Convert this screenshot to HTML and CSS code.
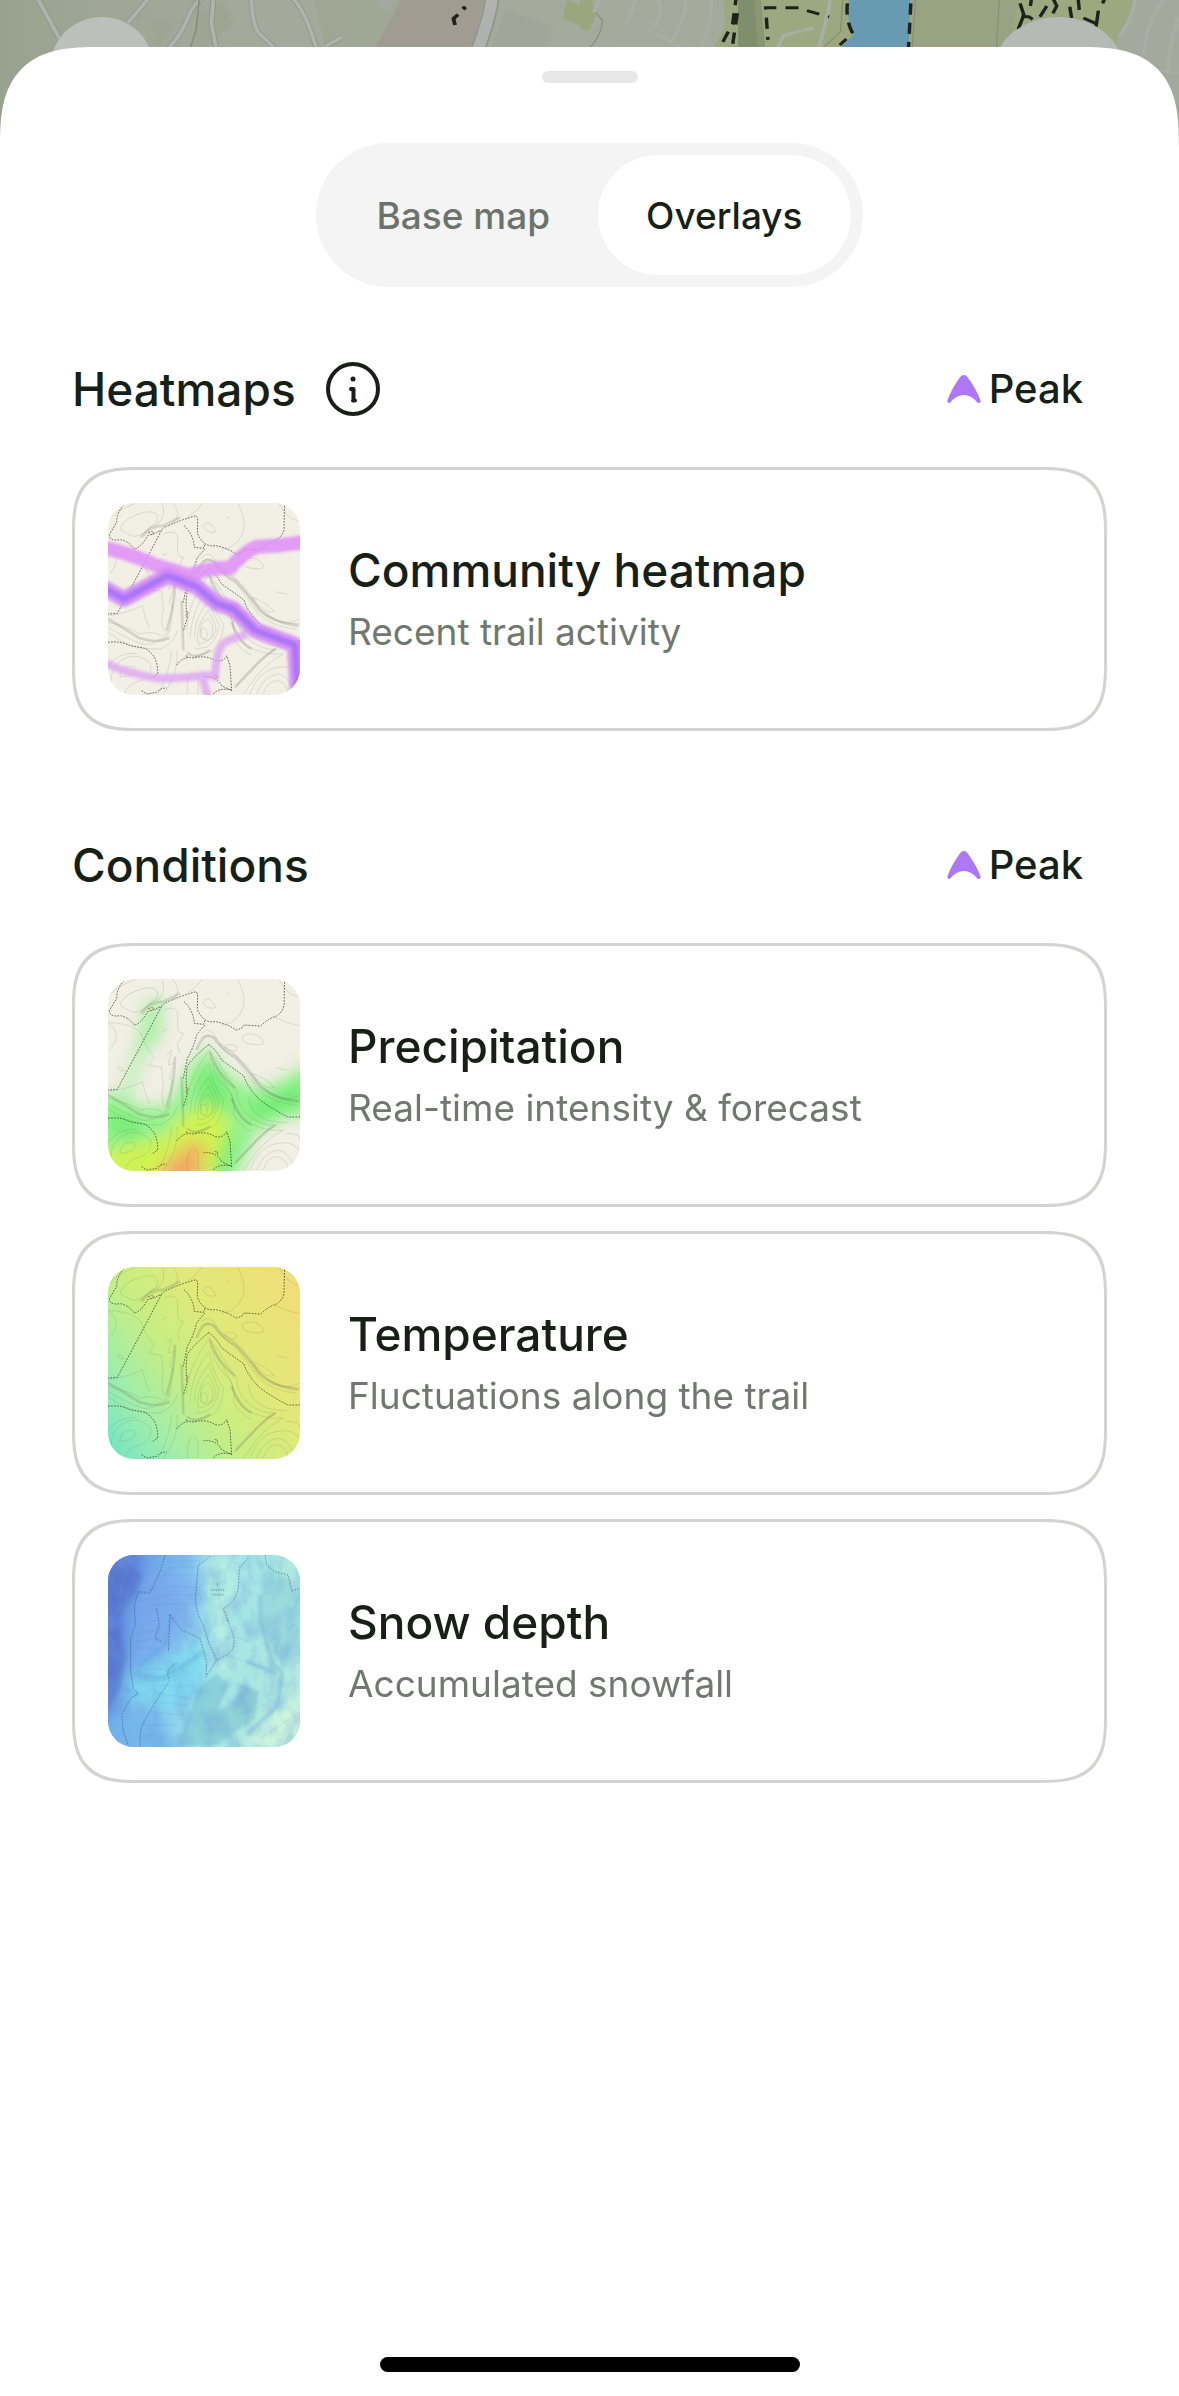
FILE: index.html
```html
<!DOCTYPE html>
<html lang="en">
<head>
    <meta charset="UTF-8">
    <meta name="viewport" content="width=device-width, initial-scale=1">
    <title>Map overlays</title>
    <link rel="stylesheet" href="styles.css">
</head>
<body>
    <!-- shared terrain drawing for the thumbnails -->
    <svg class="defs" width="0" height="0" aria-hidden="true">
        <defs>
            <filter id="blur4" x="-20%" y="-20%" width="140%" height="140%"><feGaussianBlur stdDeviation="5"/></filter>
            <filter id="blur20" x="-50%" y="-50%" width="200%" height="200%"><feGaussianBlur stdDeviation="22"/></filter>
            <filter id="relief" x="0" y="0" width="100%" height="100%">
                <feTurbulence type="fractalNoise" baseFrequency=".022 .014" numOctaves="4" seed="8"/>
                <feColorMatrix values="0 0 0 0 .16  0 0 0 0 .36  0 0 0 0 .72  1.8 0 0 0 -.7"/>
            </filter>
            <symbol id="terrain" viewBox="24 27 576 576">
                <g fill="none" stroke="#77776a" stroke-opacity=".36" stroke-width="1.5">
                    <path d="M24 80Q55 45 105 29M62 108Q60 82 105 64Q160 42 172 64Q180 85 145 105Q115 135 92 124ZM186 27Q200 60 176 88Q145 95 118 133M218 27Q250 60 215 92M306 29Q285 58 262 68M415 30Q445 90 423 128Q400 165 365 165M308 98Q325 68 347 112Q325 122 308 98ZM536 27Q560 76 599 82M523 142Q565 160 600 168M24 158Q70 190 33 236M24 158Q125 160 132 215Q150 250 162 260L146 286L185 292L190 350Q180 380 193 412"/>
                    <path d="M190 120Q240 100 233 152Q228 190 250 190L232 225L240 250M200 255L215 240L205 285L222 280L208 325L220 335L212 390Q210 425 185 440M426 200Q455 180 484 206Q504 226 465 224Q425 222 426 200ZM373 230Q390 215 411 232Q409 256 373 230ZM455 310Q490 320 523 352Q500 367 455 310ZM52 292Q60 282 72 303Q60 306 52 292ZM529 294L560 300M380 68L389 72M187 184L202 178"/>
                    <path d="M24 365Q75 360 127 335Q135 375 148 402M24 385Q90 400 120 420Q160 410 185 425M24 400Q90 440 135 452Q180 450 210 405M24 415Q90 470 180 465Q220 450 232 410M40 600Q20 540 55 505Q110 465 153 512Q155 550 120 560Q80 570 75 600M24 520Q50 475 110 478M60 550Q60 515 98 516Q115 530 90 545ZM215 470Q210 535 175 600M232 470Q235 545 190 600"/>
                    <path d="M260 410Q260 330 328 240Q335 310 375 350Q410 380 400 430Q420 470 455 485M270 430Q275 345 327 280Q340 350 370 390Q370 440 340 470L280 490M283 430Q285 365 326 320Q345 370 358 395Q350 440 320 460L285 465M292 430Q298 375 325 350Q348 390 348 410Q335 445 295 450ZM300 425Q300 380 325 375Q345 395 335 430Q315 450 300 425ZM303 405Q320 395 322 420Q320 445 304 430Z"/>
                    <path d="M305 190Q330 165 350 205Q370 240 400 248Q450 290 480 345Q520 390 600 390M305 202Q335 185 350 220Q380 250 410 270Q440 310 475 360Q520 400 590 405M360 220Q420 260 450 310Q480 350 530 380Q560 395 600 375M345 262Q380 320 410 360Q410 410 450 440Q490 470 530 465M340 280Q380 345 395 375Q400 430 440 455Q490 485 550 480M445 380Q450 430 500 450Q540 460 560 458M530 465Q480 490 455 530L410 575M550 480Q490 510 445 580L430 600M560 490Q600 490 600 510M450 600Q475 530 530 520Q580 510 600 545M470 600Q490 545 535 540Q570 545 585 600M490 600Q500 560 535 560Q560 570 565 600M280 540Q300 530 293 600M262 600Q260 550 275 538"/>
                </g>
                <g fill="none" stroke="#66665a" stroke-opacity=".2" stroke-width="8">
                    <path d="M24 375Q75 405 118 432Q170 450 208 432M125 130Q150 95 190 95L240 70M290 240Q310 180 345 205Q370 245 405 260Q445 300 475 345Q515 385 595 395M330 245Q350 310 405 355M395 385Q420 450 455 465M225 260Q225 330 200 410M262 475Q285 500 330 468M525 465Q480 495 405 580M245 320L250 470"/>
                </g>
                <g fill="none" stroke="#25251c" stroke-opacity=".85" stroke-width="2.4" stroke-dasharray="5 4">
                    <path d="M72 32Q50 55 50 85L28 122Q28 142 60 137Q85 140 103 166Q125 158 143 125Q180 115 193 100Q235 80 288 65L293 72L292 118Q310 160 345 155Q380 160 408 180Q430 175 432 165L482 168Q505 145 530 138Q555 120 552 95L554 27"/>
                    <path d="M184 110L125 222L52 358L24 360M252 95Q280 120 283 160L310 163L316 150M315 165Q300 180 290 195Q280 235 262 265Q255 300 250 325M326 224Q275 265 262 290Q255 330 262 370L250 412M326 224Q345 235 365 270Q400 295 432 318Q440 350 480 390Q530 425 565 441H600M24 445Q60 440 90 455L135 463Q175 485 173 540L155 552M230 513Q250 485 280 492Q320 482 345 500Q370 505 380 485L390 515L395 590L365 575Q350 545 310 548M125 590L140 600L170 595Q180 582 200 582M340 600Q355 580 398 588"/>
                </g>
                <g fill="none" stroke="#a5573c" stroke-width="2"><path d="M144 117q5-8 5 2m4-6q8-4 6 9M257 352q12 3 4 8t2 12M256 487q6-6 7 4M343 545q12-3 9 10"/></g>
            </symbol>
        </defs>
    </svg>

    <div class="map" aria-hidden="true">
        <svg viewBox="0 0 1179 160" preserveAspectRatio="xMidYMin slice">
            <defs>
                <linearGradient id="land">
                    <stop offset="0" stop-color="#98a38f"/><stop offset=".12" stop-color="#a1a797"/>
                    <stop offset=".3" stop-color="#a6aa9d"/><stop offset="1" stop-color="#a3a99c"/>
                </linearGradient>
            </defs>
            <path fill="url(#land)" d="M0 0H1179V160H0Z"/>
            <g transform="scale(.383 .333)">
                <path fill="#a09c92" d="M1048 0H1264L1232 145H978Z"/>
                <path fill="#9ba590" d="M820 0H1048L978 145H850ZM580 0L610 70L540 145H500L515 40ZM395 60L460 70L410 145Z" opacity=".6"/>
                <path fill="#a3a99f" d="M980 0H1040L1010 42Z"/>
                <path fill="#98a77d" d="M1480 0L1560 35L1540 90L1470 55Z"/>
                <path fill="#a2a69a" d="M1320 30L1445 80L1430 145H1280Z"/>
                <path fill="none" stroke="#92988b" stroke-width="15" d="M98-5L155 115M388-5L334 68M528-5Q505 10 490 55Q470 110 440 145M557-5L552 70L564 145M656-5Q660 80 675 98L718 145M765-5Q800 40 826 145M892 112L850 138"/>
                <path fill="none" stroke="#afb2ad" stroke-width="10" d="M98-5L155 115M388-5L334 68M528-5Q505 10 490 55Q470 110 440 145M557-5L552 70L564 145M656-5Q660 80 675 98L718 145M765-5Q800 40 826 145M892 112L850 138"/>
                <path fill="none" stroke="#92968d" stroke-width="40" d="M1284-5Q1282 40 1249 145"/>
                <path fill="none" stroke="#afb2af" stroke-width="30" d="M1284-5Q1282 40 1249 145"/>
                <path fill="none" stroke="#868c75" stroke-width="4" d="M520 0L512 90L497 145"/>
                <path fill="none" stroke="#20211c" stroke-width="10" d="M1196 44L1184 56L1188 75M1208 20L1216 28"/>
                <ellipse cx="266" cy="197" rx="133" ry="146" fill="#bcbfba"/>
            </g>
            <g transform="translate(580 0) scale(.382 .333)">
                <path fill="#9ba981" d="M375 0H1460L1400 145H350L380 75Z"/>
                <path fill="#98a77d" d="M0 0H30L40 40L20 95L0 85Z"/>
                <path fill="#7f8f6e" d="M414 0H457L475 145H414Z"/>
                <path fill="#899774" d="M457 0H474L485 145H465Z"/>
                <path fill="#689ab1" d="M704 0H865L860 145H682L715 105L700 40Z"/>
                <path fill="#97a382" d="M868 0H1150L1120 145H868Z"/>
                <path fill="none" stroke="#868c75" stroke-width="3" d="M878 0L870 145M1098 0L1090 145M688 0L682 95L635 145M35 30L58 60Q60 100 25 145"/>
                <path fill="none" stroke="#a9ada5" stroke-width="10" d="M52-5L36 38M148-5Q140 20 120 76M205-5Q220 50 187 88M276-5Q280 50 240 125M342-5Q350 60 315 145M172 82L265 145M655-5Q652 40 624 145M612 83L532 107L518 145M1455-5Q1445 60 1410 110M1530-5Q1485 60 1476 160M1568 50Q1545 110 1540 210M1490 208L1575 220"/>
                <path fill="none" stroke="#20211c" stroke-width="9" stroke-dasharray="34 24" d="M410-18L400 70L365 145M412 40L398 145M700 10Q695 60 714 100L680 135M866 10L860 145M572 23H486L492 120M594 32L652 51"/>
                <path fill="none" stroke="#20211c" stroke-width="9" d="M1152 10L1162 45L1147 88M1155 50H1175L1185 58M1182-5L1179 18M1222 18L1204 50M1238-5L1248 18L1238 40M1304-5L1307 30M1282 20L1287 54M1318 54L1350 70M1357 32L1351 80M1374-5L1368 10"/>
                <ellipse cx="1253" cy="205" rx="168" ry="154" fill="#b6b9b5"/>
            </g>
        </svg>
    </div>

    <main class="sheet">
        <div class="grabber"></div>

        <div class="tabs" role="tablist">
            <button class="tab" type="button" role="tab" aria-selected="false">Base map</button>
            <button class="tab active" type="button" role="tab" aria-selected="true">Overlays</button>
        </div>

        <section class="group">
            <div class="group-head">
                <h2>Heatmaps</h2>
                <button class="info" type="button" aria-label="About heatmaps">
                    <svg viewBox="0 0 54 54" fill="none" stroke="#181f16" stroke-linecap="round" stroke-linejoin="round">
                        <circle cx="27" cy="27" r="25" stroke-width="4"/>
                        <path stroke-width="4" d="M25 27H27.500V38.500M27 38.500H29"/>
                        <circle cx="27" cy="17" r="2.500" fill="#181f16" stroke="none"/>
                    </svg>
                </button>
                <span class="peak">
                    <svg viewBox="0 0 101 85" aria-hidden="true"><path fill="#ae78f5" d="M50 0Q57 0 61 6Q89 44 101 78Q101 87 92 84Q73 61 50 61Q27 61 8 84Q0 87 0 78Q11 44 39 6Q43 0 50 0Z"/></svg>
                    Peak
                </span>
            </div>
            <button class="card" type="button">
                <svg class="thumb" viewBox="24 24 576 576" aria-hidden="true">
                    <path fill="#f2efe5" d="M24 24H600V600H24Z"/>
                    <use href="#terrain" x="24" y="24" width="576" height="576"/>
                    <g fill="none" stroke-linejoin="round" filter="url(#blur4)">
                        <path stroke="#dca0f6" stroke-opacity=".75" stroke-width="24" d="M10 500Q60 530 170 550Q260 550 318 540L345 545Q350 455 375 442Q400 428 440 418M305 540L325 610"/>
                        <path stroke="#df8df8" stroke-opacity=".85" stroke-width="42" d="M10 158Q90 175 160 208L270 242Q310 220 390 218Q435 170 470 155Q530 155 620 140"/>
                        <path stroke="#d38bf7" stroke-opacity=".9" stroke-width="48" d="M10 278L72 312L203 242L290 275L350 325L400 342L465 405L585 450L595 620"/>
                        <path stroke="#aa74f8" stroke-width="20" d="M10 278L72 312L203 242L290 275L350 325L400 342L465 405L585 450L595 620"/>
                    </g>
                </svg>
                <span class="card-text">
                    <span class="card-title">Community heatmap</span>
                    <span class="card-sub">Recent trail activity</span>
                </span>
            </button>
        </section>

        <section class="group">
            <div class="group-head">
                <h2>Conditions</h2>
                <span class="peak">
                    <svg viewBox="0 0 101 85" aria-hidden="true"><path fill="#ae78f5" d="M50 0Q57 0 61 6Q89 44 101 78Q101 87 92 84Q73 61 50 61Q27 61 8 84Q0 87 0 78Q11 44 39 6Q43 0 50 0Z"/></svg>
                    Peak
                </span>
            </div>
            <button class="card" type="button">
                <svg class="thumb" viewBox="24 27 576 576" aria-hidden="true">
                    <path fill="#f2efe5" d="M24 27H600V603H24Z"/>
                    <g filter="url(#blur20)">
                        <path fill="#9bf098" d="M140 90L190 80L185 200L130 260L90 390L65 390L105 240Z" opacity=".8"/>
                        <path fill="#96f28f" d="M-20 380L50 370Q120 430 210 400Q250 300 325 225Q370 320 420 330Q480 370 530 340L640 270V430L540 450L470 490L400 640H-20Z"/>
                        <path fill="#72ec72" d="M24 420L130 460L110 510L24 480ZM300 300L350 290L400 420L300 400ZM430 410L620 330V400L480 450ZM360 490L410 500L380 620L330 610Z"/>
                        <path fill="#cff352" d="M-20 550Q110 520 190 500Q250 410 340 405Q400 430 380 500L330 640H-20Z"/>
                        <path fill="#f0b85c" d="M140 640L215 560L270 510L320 520L300 640Z"/>
                        <path fill="#f3a06a" d="M190 640L240 570L275 570L280 640Z"/>
                    </g>
                    <use href="#terrain" x="24" y="27" width="576" height="576"/>
                </svg>
                <span class="card-text">
                    <span class="card-title">Precipitation</span>
                    <span class="card-sub">Real-time intensity &amp; forecast</span>
                </span>
            </button>
            <button class="card" type="button">
                <svg class="thumb" viewBox="24 27 576 576" aria-hidden="true">
                    <defs>
                        <linearGradient id="warmth" x1="0" y1=".9" x2="1" y2=".2">
                            <stop offset="0" stop-color="#79e6c2"/><stop offset=".2" stop-color="#a3edaa"/>
                            <stop offset=".42" stop-color="#c6ee84"/><stop offset=".68" stop-color="#e1e978"/>
                            <stop offset="1" stop-color="#efdf78"/>
                        </linearGradient>
                    </defs>
                    <path fill="url(#warmth)" d="M24 27H600V603H24Z"/>
                    <use href="#terrain" x="24" y="27" width="576" height="576"/>
                </svg>
                <span class="card-text">
                    <span class="card-title">Temperature</span>
                    <span class="card-sub">Fluctuations along the trail</span>
                </span>
            </button>
            <button class="card" type="button">
                <svg class="thumb" viewBox="24 30 576 576" aria-hidden="true">
                    <defs>
                        <linearGradient id="snow" x1="0" y1=".35" x2="1" y2=".6">
                            <stop offset="0" stop-color="#6292e6"/><stop offset=".3" stop-color="#7fbff0"/>
                            <stop offset=".55" stop-color="#9ee3ea"/><stop offset=".8" stop-color="#ace8e0"/>
                            <stop offset="1" stop-color="#b4e9e2"/>
                        </linearGradient>
                    </defs>
                    <path fill="url(#snow)" d="M24 30H600V606H24Z"/>
                    <g filter="url(#blur20)">
                        <path fill="#5f7bd6" d="M0 0H120V110L70 190L70 380L10 530H0Z"/>
                        <path fill="#7ca8f0" d="M120 80L290 100L270 240L190 330L100 360Z" opacity=".7"/>
                        <path fill="#80daf0" d="M80 390L330 290L320 390L250 500L90 470Z"/>
                        <path fill="#b8f0e0" d="M310 30H420L390 230L400 390H330L340 260Z"/>
                        <path fill="#74b6ea" d="M24 530L160 490L230 620H24Z"/>
                        <path fill="#cdf5dd" d="M420 620L480 540L620 420V620Z"/>
                    </g>
                    <g filter="url(#blur4)">
                        <path fill="#75bbc9" opacity=".5" d="M300 425L350 385L385 420L350 500L400 470L425 415L475 440L465 520L390 570L350 600H235L270 500Z"/>
                        <path fill="#80c8d8" opacity=".4" d="M485 150L510 70L600 120V320L545 370L510 290L480 230Z"/>
                        <path fill="#4466bc" opacity=".3" d="M24 80L80 60L130 90L110 140L60 220L24 210ZM24 260L60 240L75 340L60 430L24 500Z"/>
                        <path fill="none" stroke="#4d9bd4" stroke-opacity=".3" stroke-width="12" d="M215 210L195 300L120 360M100 390L190 400L310 320M70 430L120 450M480 150V230L520 360L545 380L535 480L440 570M440 350L530 385"/>
                    </g>
                    <rect x="24" y="30" width="576" height="576" filter="url(#relief)" opacity=".5"/>
                    <g fill="none" stroke="#386bad" stroke-opacity=".22" stroke-width="1.500">
                        <path d="M110 150Q200 110 285 130M120 170Q190 140 290 150M120 190Q190 170 285 180M120 220Q160 180 210 210M110 245L190 220M110 265L190 250M105 290L180 280M100 310L170 310M110 380Q170 360 215 380Q180 410 110 380M120 400Q190 420 250 380M190 90L285 90M195 70L295 65M200 50L300 48M180 420Q230 430 285 420M170 445L275 460M150 470L265 480M140 500L250 510M130 540L235 540M130 570L230 580M370 280Q420 260 475 310M380 330L500 370M500 250L590 180M510 290L600 230M410 510Q470 500 520 460M480 580L600 500M430 160L470 210M250 260L300 360"/>
                    </g>
                    <g fill="none" stroke="#253a75" stroke-opacity=".8" stroke-width="2.400" stroke-dasharray="4 5">
                        <path d="M195 32L180 80L150 145L115 140L103 180L106 240L92 280V380L100 430Q125 450 95 455L65 510L70 560L85 600M230 355Q190 375 210 405Q160 480 138 520Q115 550 122 606M170 190L178 240L165 280L185 290M210 210L205 320M210 210L245 255L300 280L320 350L318 395L350 345M330 35L295 60L287 150Q285 200 310 240L325 290L350 345L380 330Q410 310 400 270L380 220M445 40L418 70L415 130Q405 175 370 190L385 230M495 30L500 60L525 80L565 90L575 138L600 130"/>
                    </g>
                    <path fill="none" stroke="#34546e" stroke-width="2" stroke-dasharray="4 3" d="M350 118H357M333 135H376M338 149H370"/>
                </svg>
                <span class="card-text">
                    <span class="card-title">Snow depth</span>
                    <span class="card-sub">Accumulated snowfall</span>
                </span>
            </button>
        </section>

        <div class="home-bar"></div>
    </main>
</body>
</html>
```
FILE: styles.css
```css
* {
    box-sizing: border-box;
}
body {
    margin: 0;
    font-family: Inter, "Liberation Sans", sans-serif;
    font-weight: 500;
    color: #181f16;
    background-color: #fff;
    display: flex;
    flex-direction: column;
    min-height: 100vh;
}
button {
    font: inherit;
    color: inherit;
    border: none;
    background: none;
    padding: 0;
    cursor: pointer;
}
.defs {
    position: absolute;
}
.map {
    height: 160px;
}
.map svg {
    display: block;
    width: 100%;
    height: 100%;
}
/* bottom sheet slides over the map */
.sheet {
    position: relative;
    flex: 1;
    display: flex;
    flex-direction: column;
    margin-top: -113px;
    padding: 24px 72px;
    background-color: #fff;
    border-radius: 76px 76px 0 0;
}
.grabber {
    width: 96px;
    height: 12px;
    margin: 0 auto 60px;
    border-radius: 6px;
    background-color: #e7e7e7;
}
.tabs {
    display: flex;
    align-self: center;
    padding: 12px;
    border-radius: 72px;
    background-color: #f4f4f4;
}
.tab {
    height: 120px;
    padding: 0 48px;
    border-radius: 60px;
    font-size: 37px;
    color: #6b736b;
}
.tab.active {
    background-color: #fff;
    color: #181f16;
}
.group {
    display: flex;
    flex-direction: column;
    gap: 24px;
    margin-top: 72px;
}
.group + .group {
    margin-top: 104px;
}
.group-head {
    display: flex;
    align-items: center;
    margin-bottom: 24px;
    padding-right: 24px;
}
h2 {
    margin: 0;
    font-size: 46px;
    line-height: 60px;
    font-weight: 500;
}
.info {
    width: 54px;
    height: 54px;
    margin-left: 30px;
}
.info svg {
    display: block;
}
.peak {
    display: flex;
    align-items: center;
    gap: 8px;
    margin-left: auto;
    font-size: 40px;
    line-height: 48px;
}
.peak svg {
    width: 34px;
    height: 28px;
}
.card {
    display: flex;
    align-items: center;
    gap: 48px;
    padding: 33px;
    border: 3px solid #d3d4d0;
    border-radius: 50px;
    text-align: left;
}
.thumb {
    flex: none;
    width: 192px;
    height: 192px;
    border-radius: 26px;
}
.card-text {
    display: flex;
    flex-direction: column;
    gap: 6px;
}
.card-title {
    font-size: 46px;
    line-height: 60px;
}
.card-sub {
    font-size: 37px;
    line-height: 52px;
    font-weight: 400;
    color: #707870;
}
.home-bar {
    width: 420px;
    max-width: 100%;
    height: 15px;
    margin: auto auto 0;
    border-radius: 8px;
    background-color: #000;
}
/* smoother corners where the browser can draw them */
@supports (corner-shape: superellipse(1.5)) {
    .sheet {
        border-radius: 100px 100px 0 0;
        corner-shape: superellipse(1.5);
    }
    .card {
        border-radius: 66px;
        corner-shape: superellipse(1.5);
    }
}
```
